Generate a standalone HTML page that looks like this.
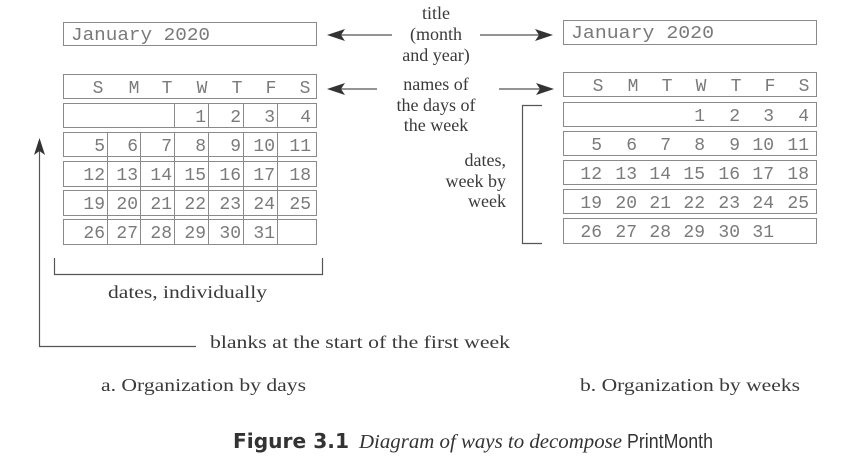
<!DOCTYPE html>
<html><head><meta charset="utf-8"><style>
html,body{margin:0;padding:0;background:#fff;width:860px;height:475px;overflow:hidden}
svg{display:block}
.m{font-family:"Liberation Mono",monospace;font-size:18px;fill:#7a7a7a}
.s{font-family:"Liberation Serif",serif;font-size:18px;fill:#3a3a3a}
.b{fill:none;stroke:#8a8a8a;stroke-width:1}
.l{fill:none;stroke:#555;stroke-width:1.2}
</style></head><body>
<svg width="860" height="475" viewBox="0 0 860 475" xmlns="http://www.w3.org/2000/svg">
<rect width="860" height="475" fill="#fff"/>
<rect class="b" x="63.5" y="22.5" width="253" height="23"/>
<text class="m" x="71" y="40" textLength="139" lengthAdjust="spacingAndGlyphs">January  2020</text>
<rect class="b" x="63.5" y="74.5" width="253" height="24"/>
<g class="m" text-anchor="middle">
<text x="98" y="93">S</text><text x="134" y="93">M</text><text x="167" y="93">T</text><text x="202" y="93">W</text><text x="237" y="93">T</text><text x="271" y="93">F</text><text x="305" y="93">S</text>
</g>
<g class="b">
<rect x="63.5" y="103.5" width="253" height="24"/>
<line x1="174.5" y1="103" x2="174.5" y2="128"/><line x1="208.5" y1="103" x2="208.5" y2="128"/><line x1="243.5" y1="103" x2="243.5" y2="128"/><line x1="277.5" y1="103" x2="277.5" y2="128"/>
<rect x="63.5" y="132.5" width="253" height="24"/>
<rect x="63.5" y="161.5" width="253" height="25"/>
<rect x="63.5" y="190.5" width="253" height="25"/>
<rect x="63.5" y="219.5" width="253" height="25"/>
</g>
<g class="b">
<line x1="107.5" y1="132" x2="107.5" y2="245"/><line x1="140.5" y1="132" x2="140.5" y2="245"/><line x1="174.5" y1="132" x2="174.5" y2="245"/><line x1="208.5" y1="132" x2="208.5" y2="245"/><line x1="243.5" y1="132" x2="243.5" y2="245"/><line x1="277.5" y1="132" x2="277.5" y2="245"/>
</g>
<g class="m" text-anchor="end">
<text x="206" y="122">1</text><text x="241" y="122">2</text><text x="275" y="122">3</text><text x="311" y="122">4</text>
<text x="105" y="151">5</text><text x="138" y="151">6</text><text x="172" y="151">7</text><text x="206" y="151">8</text><text x="241" y="151">9</text><text x="275" y="151">10</text><text x="311" y="151">11</text>
<text x="105" y="180">12</text><text x="138" y="180">13</text><text x="172" y="180">14</text><text x="206" y="180">15</text><text x="241" y="180">16</text><text x="275" y="180">17</text><text x="311" y="180">18</text>
<text x="105" y="209">19</text><text x="138" y="209">20</text><text x="172" y="209">21</text><text x="206" y="209">22</text><text x="241" y="209">23</text><text x="275" y="209">24</text><text x="311" y="209">25</text>
<text x="105" y="238">26</text><text x="138" y="238">27</text><text x="172" y="238">28</text><text x="206" y="238">29</text><text x="241" y="238">30</text><text x="275" y="238">31</text>
</g>
<path class="l" d="M54.5 258V274.5H322.5V258"/>
<text class="s" x="108" y="298" textLength="159" lengthAdjust="spacingAndGlyphs">dates, individually</text>
<path class="l" d="M39.5 150V346.5H196"/>
<path d="M39.5 138L34 155L39.5 151L45 155Z" fill="#333"/>
<text class="s" x="210" y="348" textLength="300" lengthAdjust="spacingAndGlyphs">blanks at the start of the first week</text>
<rect class="b" x="563.5" y="20.5" width="253" height="24"/>
<text class="m" x="571" y="38" textLength="143" lengthAdjust="spacingAndGlyphs">January  2020</text>
<rect class="b" x="563.5" y="72.5" width="253" height="24"/>
<g class="m" text-anchor="middle">
<text x="598" y="91">S</text><text x="633" y="91">M</text><text x="667" y="91">T</text><text x="701" y="91">W</text><text x="736" y="91">T</text><text x="770" y="91">F</text><text x="804" y="91">S</text>
</g>
<g class="b">
<rect x="563.5" y="102.5" width="253" height="24"/>
<rect x="563.5" y="131.5" width="253" height="24"/>
<rect x="563.5" y="160.5" width="253" height="24"/>
<rect x="563.5" y="189.5" width="253" height="24"/>
<rect x="563.5" y="218.5" width="253" height="25"/>
</g>
<g class="m" text-anchor="end">
<text x="705" y="121">1</text><text x="740" y="121">2</text><text x="774" y="121">3</text><text x="809" y="121">4</text>
<text x="602" y="150">5</text><text x="637" y="150">6</text><text x="671" y="150">7</text><text x="705" y="150">8</text><text x="740" y="150">9</text><text x="774" y="150">10</text><text x="809" y="150">11</text>
<text x="602" y="179">12</text><text x="637" y="179">13</text><text x="671" y="179">14</text><text x="705" y="179">15</text><text x="740" y="179">16</text><text x="774" y="179">17</text><text x="809" y="179">18</text>
<text x="602" y="208">19</text><text x="637" y="208">20</text><text x="671" y="208">21</text><text x="705" y="208">22</text><text x="740" y="208">23</text><text x="774" y="208">24</text><text x="809" y="208">25</text>
<text x="602" y="237">26</text><text x="637" y="237">27</text><text x="671" y="237">28</text><text x="705" y="237">29</text><text x="740" y="237">30</text><text x="774" y="237">31</text>
</g>
<path class="l" d="M542 105.5H522.5V243.5H542"/>
<g class="s" text-anchor="middle">
<text x="436" y="19">title</text>
<text x="436" y="40">(month</text>
<text x="436" y="61">and year)</text>
<text x="436" y="90">names of</text>
<text x="436" y="111">the days of</text>
<text x="436" y="131">the week</text>
</g>
<g class="s" text-anchor="end">
<text x="506" y="166">dates,</text>
<text x="506" y="187">week by</text>
<text x="506" y="207">week</text>
</g>
<path class="l" d="M336 35H392M480 35H540M336 89H377M499 89H544"/>
<path d="M327 35L345 29L341 35L345 41Z" fill="#333"/>
<path d="M553 35L535 29L539 35L535 41Z" fill="#333"/>
<path d="M327 89L345 83L341 89L345 95Z" fill="#333"/>
<path d="M554 89L536 83L540 89L536 95Z" fill="#333"/>
<text class="s" x="101" y="391" textLength="205" lengthAdjust="spacingAndGlyphs">a. Organization by days</text>
<text class="s" x="580" y="391" textLength="220" lengthAdjust="spacingAndGlyphs">b. Organization by weeks</text>
<text x="233" y="448" textLength="116" lengthAdjust="spacingAndGlyphs" style="font-family:'DejaVu Sans','Liberation Sans',sans-serif;font-weight:bold;font-size:20px;fill:#333">Figure 3.1</text>
<text x="359" y="448" style="font-family:'Liberation Serif',serif;font-style:italic;font-size:20px;fill:#333" textLength="263" lengthAdjust="spacingAndGlyphs">Diagram of ways to decompose</text>
<text x="627" y="448" style="font-family:'Liberation Sans',sans-serif;font-size:20px;fill:#333" textLength="86" lengthAdjust="spacingAndGlyphs">PrintMonth</text>
</svg>
</body></html>
